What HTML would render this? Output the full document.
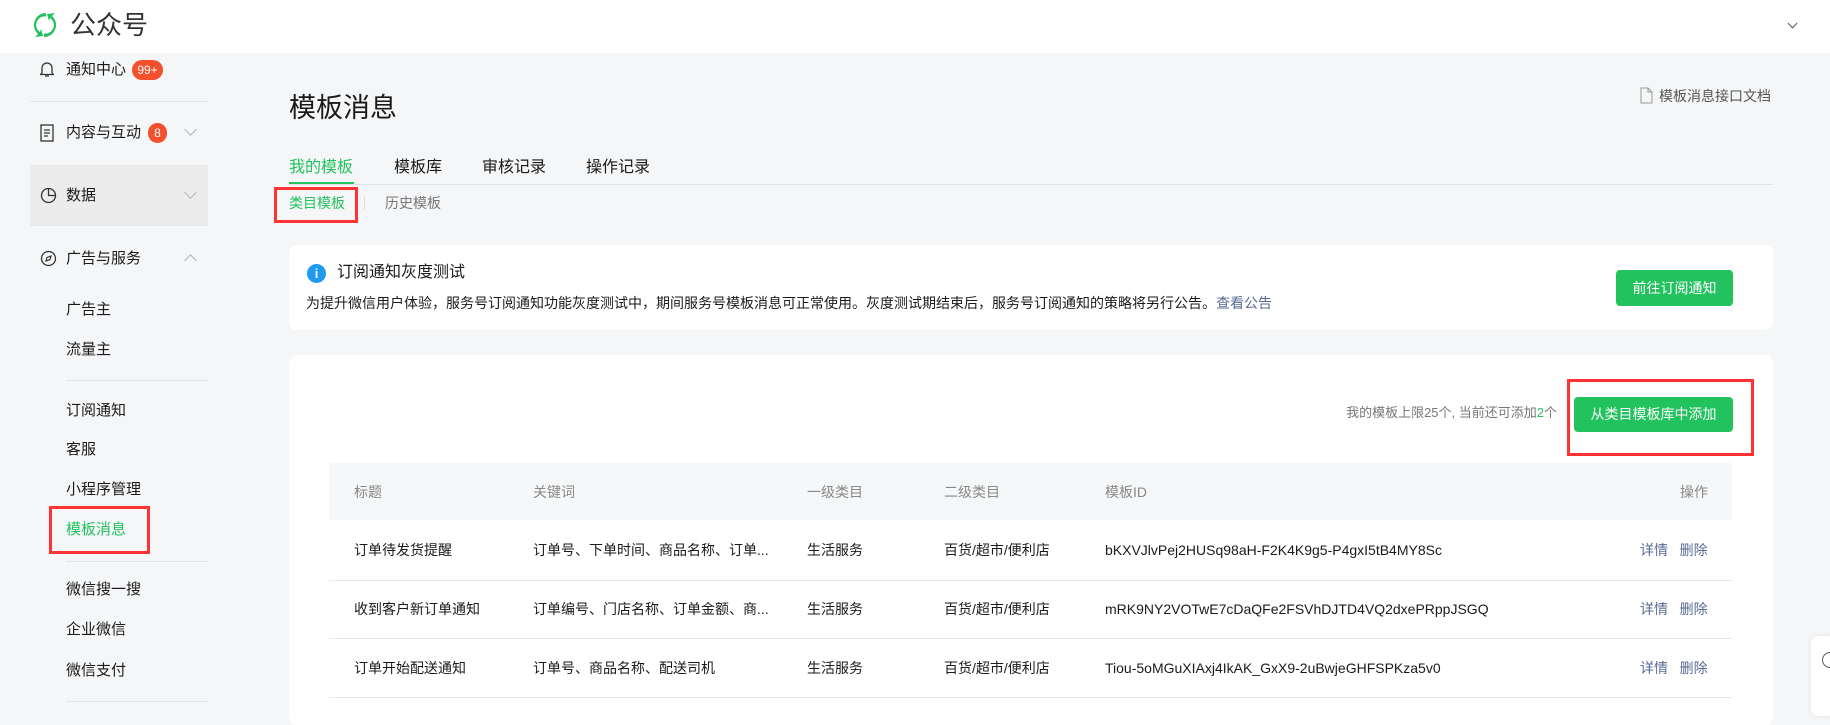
<!DOCTYPE html>
<html><head><meta charset="utf-8"><style>
*{margin:0;padding:0;box-sizing:border-box}
body{width:1830px;height:711px;overflow:hidden;background:#f5f6f7;font-family:"Liberation Sans","Noto Sans CJK SC",sans-serif;color:#1a1a1a;position:relative;font-size:14px}
.a{position:absolute;white-space:nowrap}
.hdr{left:0;top:0;width:1830px;height:53px;background:#fff}
.side{font-size:15px;color:#1a1a1a;line-height:20px}
.div{height:1px;background:#e4e5e6}
.badge{background:#fa5151;color:#fff;border-radius:10px;font-size:12px;height:20px;line-height:20px;text-align:center}
.chev{width:9px;height:9px;border-right:1.3px solid #b5b5b5;border-bottom:1.3px solid #b5b5b5}
.red{border:3px solid #f33}
.btn{background:#22c25f;color:#fff;border-radius:4px;font-size:14px;text-align:center}
.card{background:#fff;border-radius:8px}
.th{color:#888;font-size:14px;line-height:20px}
.td{font-size:14px;line-height:20px;color:#1a1a1a}
.lk{color:#576b95}
</style></head><body>
<div class="a hdr"></div>
<svg class="a" style="left:29px;top:9px" width="32" height="32" viewBox="0 0 32 32"><path d="M17 4A12 12 0 0 0 9 25l-3 3 8-1-2-7-1 3A8.5 8.5 0 0 1 17 7.5z" fill="#22c25f"/><path d="M15 28A12 12 0 0 0 23 7l3-3-8 1 2 7 1-3A8.5 8.5 0 0 1 15 24.5z" fill="#22c25f"/></svg>
<div class="a" style="left:70px;top:8px;font-size:26px;line-height:34px;color:#333">公众号</div>
<div class="a chev" style="left:1789px;top:20px;transform:rotate(45deg);width:7px;height:7px;border-color:#555;border-width:1px"></div>

<svg class="a" style="left:40px;top:61px" width="14" height="17" viewBox="0 0 14 17"><path d="M2 12V7a5 5 0 0 1 10 0v5l1.5 1.5h-13z M5 15h4" stroke="#333" fill="none" stroke-width="1.3"/></svg>
<div class="a side" style="left:66px;top:60px">通知中心</div>
<div class="a badge" style="left:132px;top:60px;width:31px;background:#f5502d">99+</div>
<div class="a div" style="left:30px;top:101px;width:178px"></div>
<svg class="a" style="left:40px;top:124px" width="14" height="18" viewBox="0 0 14 18"><rect x="1" y="1" width="12" height="16" fill="none" stroke="#333" stroke-width="1.3"/><path d="M4 6h6M4 9h6M4 12h4" stroke="#333" stroke-width="1.2"/></svg>
<div class="a side" style="left:66px;top:123px">内容与互动</div>
<div class="a badge" style="left:148px;top:123px;width:19px;background:#f5502d">8</div>
<div class="a chev" style="left:186px;top:125px;transform:rotate(45deg)"></div>
<div class="a" style="left:30px;top:165px;width:178px;height:61px;background:#ececed;border-top:1px solid #e4e5e6;border-bottom:1px solid #e4e5e6"></div>
<svg class="a" style="left:40px;top:187px" width="17" height="17" viewBox="0 0 17 17"><circle cx="8.5" cy="8.5" r="7" fill="none" stroke="#333" stroke-width="1.3"/><path d="M8.5 1.5v7h7" fill="none" stroke="#333" stroke-width="1.3"/></svg>
<div class="a side" style="left:66px;top:186px">数据</div>
<div class="a chev" style="left:186px;top:188px;transform:rotate(45deg)"></div>
<svg class="a" style="left:40px;top:250px" width="17" height="17" viewBox="0 0 17 17"><circle cx="8.5" cy="8.5" r="7" fill="none" stroke="#333" stroke-width="1.3"/><path d="M11 6l-4 1.5L6 11l4-1.5z" fill="none" stroke="#333" stroke-width="1.2"/></svg>
<div class="a side" style="left:66px;top:249px">广告与服务</div>
<div class="a chev" style="left:186px;top:256px;transform:rotate(-135deg)"></div>
<div class="a side" style="left:66px;top:300px">广告主</div>
<div class="a side" style="left:66px;top:340px">流量主</div>
<div class="a div" style="left:66px;top:380px;width:142px"></div>
<div class="a side" style="left:66px;top:401px">订阅通知</div>
<div class="a side" style="left:66px;top:440px">客服</div>
<div class="a side" style="left:66px;top:480px">小程序管理</div>
<div class="a side" style="left:66px;top:520px;color:#22c25f">模板消息</div>
<div class="a red" style="left:49px;top:506px;width:101px;height:48px"></div>
<div class="a div" style="left:66px;top:561px;width:142px"></div>
<div class="a side" style="left:66px;top:580px">微信搜一搜</div>
<div class="a side" style="left:66px;top:620px">企业微信</div>
<div class="a side" style="left:66px;top:661px">微信支付</div>
<div class="a div" style="left:66px;top:701px;width:142px"></div>

<div class="a" style="left:289px;top:90px;font-size:27px;line-height:36px;color:#1a1a1a">模板消息</div>
<svg class="a" style="left:1640px;top:87px" width="13" height="17" viewBox="0 0 13 17"><path d="M1 1h7l4 4v11H1z M8 1v4h4" fill="none" stroke="#999" stroke-width="1"/></svg>
<div class="a" style="left:1659px;top:86px;font-size:14px;line-height:20px;color:#555">模板消息接口文档</div>
<div class="a" style="left:289px;top:157px;font-size:16px;line-height:22px;color:#22c25f">我的模板</div>
<div class="a" style="left:394px;top:157px;font-size:16px;line-height:22px">模板库</div>
<div class="a" style="left:482px;top:157px;font-size:16px;line-height:22px">审核记录</div>
<div class="a" style="left:586px;top:157px;font-size:16px;line-height:22px">操作记录</div>
<div class="a" style="left:289px;top:184px;width:1484px;height:1px;background:#e0e1e2"></div>
<div class="a" style="left:289px;top:182px;width:65px;height:2px;background:#22c25f"></div>
<div class="a" style="left:289px;top:193px;font-size:14px;line-height:20px;color:#22c25f">类目模板</div>
<div class="a" style="left:364px;top:196px;width:1px;height:14px;background:#ddd"></div>
<div class="a" style="left:385px;top:193px;font-size:14px;line-height:20px;color:#777">历史模板</div>
<div class="a red" style="left:274px;top:187px;width:84px;height:36px"></div>

<div class="a card" style="left:289px;top:245px;width:1484px;height:85px"></div>
<div class="a" style="left:307px;top:264px;width:19px;height:19px;border-radius:50%;background:#1e9bf0;color:#fff;font-size:13px;line-height:19px;text-align:center;font-weight:bold">i</div>
<div class="a" style="left:337px;top:262px;font-size:16px;line-height:22px">订阅通知灰度测试</div>
<div class="a" style="left:306px;top:293px;font-size:14px;line-height:20px">为提升微信用户体验，服务号订阅通知功能灰度测试中，期间服务号模板消息可正常使用。灰度测试期结束后，服务号订阅通知的策略将另行公告。<span class="lk">查看公告</span></div>
<div class="a btn" style="left:1616px;top:270px;width:117px;height:36px;line-height:36px">前往订阅通知</div>

<div class="a card" style="left:289px;top:355px;width:1484px;height:370px"></div>
<div class="a" style="left:1308px;top:403px;font-size:13px;line-height:20px;color:#777;width:249px;text-align:right">我的模板上限25个, 当前还可添加<span style="color:#22c25f">2</span>个</div>
<div class="a btn" style="left:1574px;top:397px;width:159px;height:35px;line-height:35px">从类目模板库中添加</div>
<div class="a red" style="left:1567px;top:379px;width:187px;height:77px"></div>

<div class="a" style="left:329px;top:463px;width:1403px;height:57px;background:#f6f7f8"></div>
<div class="a th" style="left:354px;top:482px">标题</div>
<div class="a th" style="left:533px;top:482px">关键词</div>
<div class="a th" style="left:807px;top:482px">一级类目</div>
<div class="a th" style="left:944px;top:482px">二级类目</div>
<div class="a th" style="left:1105px;top:482px">模板ID</div>
<div class="a th" style="left:1680px;top:482px">操作</div>

<div class="a td" style="left:354px;top:540px">订单待发货提醒</div>
<div class="a td" style="left:533px;top:540px">订单号、下单时间、商品名称、订单...</div>
<div class="a td" style="left:807px;top:540px">生活服务</div>
<div class="a td" style="left:944px;top:540px">百货/超市/便利店</div>
<div class="a td" style="left:1105px;top:540px">bKXVJlvPej2HUSq98aH-F2K4K9g5-P4gxI5tB4MY8Sc</div>
<div class="a td lk" style="left:1640px;top:540px">详情&nbsp;&nbsp;&nbsp;删除</div>
<div class="a" style="left:329px;top:580px;width:1403px;height:1px;background:#e7e7e7"></div>

<div class="a td" style="left:354px;top:599px">收到客户新订单通知</div>
<div class="a td" style="left:533px;top:599px">订单编号、门店名称、订单金额、商...</div>
<div class="a td" style="left:807px;top:599px">生活服务</div>
<div class="a td" style="left:944px;top:599px">百货/超市/便利店</div>
<div class="a td" style="left:1105px;top:599px">mRK9NY2VOTwE7cDaQFe2FSVhDJTD4VQ2dxePRppJSGQ</div>
<div class="a td lk" style="left:1640px;top:599px">详情&nbsp;&nbsp;&nbsp;删除</div>
<div class="a" style="left:329px;top:638px;width:1403px;height:1px;background:#e7e7e7"></div>

<div class="a td" style="left:354px;top:658px">订单开始配送通知</div>
<div class="a td" style="left:533px;top:658px">订单号、商品名称、配送司机</div>
<div class="a td" style="left:807px;top:658px">生活服务</div>
<div class="a td" style="left:944px;top:658px">百货/超市/便利店</div>
<div class="a td" style="left:1105px;top:658px">Tiou-5oMGuXIAxj4IkAK_GxX9-2uBwjeGHFSPKza5v0</div>
<div class="a td lk" style="left:1640px;top:658px">详情&nbsp;&nbsp;&nbsp;删除</div>
<div class="a" style="left:329px;top:697px;width:1403px;height:1px;background:#e7e7e7"></div>

<div class="a" style="left:1811px;top:636px;width:30px;height:80px;background:#fff;border-radius:6px;box-shadow:0 0 4px rgba(0,0,0,.1)"></div>
<div class="a" style="left:1822px;top:652px;width:16px;height:16px;border:1.3px solid #555;border-radius:50%"></div>
</body></html>
